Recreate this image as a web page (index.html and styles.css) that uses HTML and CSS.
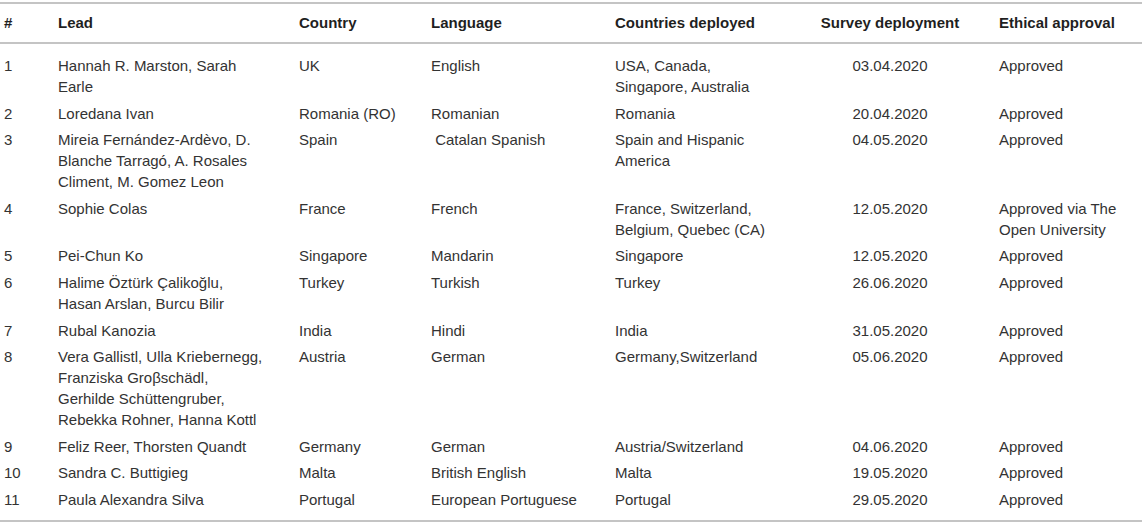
FILE: index.html
```html
<!DOCTYPE html>
<html lang="en">
<head>
<meta charset="utf-8">
<title>Survey deployment</title>
<link rel="stylesheet" href="styles.css">
</head>
<body>
<table class="survey">
  <colgroup>
    <col class="c-num">
    <col class="c-lead">
    <col class="c-country">
    <col class="c-lang">
    <col class="c-deployed">
    <col class="c-date">
    <col class="c-ethic">
  </colgroup>
  <thead>
    <tr>
      <th>#</th>
      <th class="lead">Lead</th>
      <th>Country</th>
      <th>Language</th>
      <th>Countries deployed</th>
      <th class="center">Survey deployment</th>
      <th>Ethical approval</th>
    </tr>
  </thead>
  <tbody>
    <tr>
      <td>1</td>
      <td class="lead">Hannah R. Marston, Sarah<br>Earle</td>
      <td>UK</td>
      <td>English</td>
      <td class="deployed">USA, Canada, Singapore, Australia</td>
      <td class="center">03.04.2020</td>
      <td>Approved</td>
    </tr>
    <tr>
      <td>2</td>
      <td class="lead">Loredana Ivan</td>
      <td>Romania (RO)</td>
      <td>Romanian</td>
      <td class="deployed">Romania</td>
      <td class="center">20.04.2020</td>
      <td>Approved</td>
    </tr>
    <tr>
      <td>3</td>
      <td class="lead">Mireia Fernández-Ardèvo, D.<br>Blanche Tarragó, A. Rosales<br>Climent, M. Gomez Leon</td>
      <td>Spain</td>
      <td>&nbsp;Catalan Spanish</td>
      <td class="deployed">Spain and Hispanic America</td>
      <td class="center">04.05.2020</td>
      <td>Approved</td>
    </tr>
    <tr>
      <td>4</td>
      <td class="lead">Sophie Colas</td>
      <td>France</td>
      <td>French</td>
      <td class="deployed">France, Switzerland, Belgium, Quebec (CA)</td>
      <td class="center">12.05.2020</td>
      <td>Approved via The Open University</td>
    </tr>
    <tr>
      <td>5</td>
      <td class="lead">Pei-Chun Ko</td>
      <td>Singapore</td>
      <td>Mandarin</td>
      <td class="deployed">Singapore</td>
      <td class="center">12.05.2020</td>
      <td>Approved</td>
    </tr>
    <tr>
      <td>6</td>
      <td class="lead">Halime Öztürk Çalikoğlu,<br>Hasan Arslan, Burcu Bilir</td>
      <td>Turkey</td>
      <td>Turkish</td>
      <td class="deployed">Turkey</td>
      <td class="center">26.06.2020</td>
      <td>Approved</td>
    </tr>
    <tr>
      <td>7</td>
      <td class="lead">Rubal Kanozia</td>
      <td>India</td>
      <td>Hindi</td>
      <td class="deployed">India</td>
      <td class="center">31.05.2020</td>
      <td>Approved</td>
    </tr>
    <tr>
      <td>8</td>
      <td class="lead">Vera Gallistl, Ulla Kriebernegg,<br>Franziska Groβschädl,<br>Gerhilde Schüttengruber,<br>Rebekka Rohner, Hanna Kottl</td>
      <td>Austria</td>
      <td>German</td>
      <td class="deployed">Germany,Switzerland</td>
      <td class="center">05.06.2020</td>
      <td>Approved</td>
    </tr>
    <tr>
      <td>9</td>
      <td class="lead">Feliz Reer, Thorsten Quandt</td>
      <td>Germany</td>
      <td>German</td>
      <td class="deployed">Austria/Switzerland</td>
      <td class="center">04.06.2020</td>
      <td>Approved</td>
    </tr>
    <tr>
      <td>10</td>
      <td class="lead">Sandra C. Buttigieg</td>
      <td>Malta</td>
      <td>British English</td>
      <td class="deployed">Malta</td>
      <td class="center">19.05.2020</td>
      <td>Approved</td>
    </tr>
    <tr>
      <td>11</td>
      <td class="lead">Paula Alexandra Silva</td>
      <td>Portugal</td>
      <td>European Portuguese</td>
      <td class="deployed">Portugal</td>
      <td class="center">29.05.2020</td>
      <td>Approved</td>
    </tr>
  </tbody>
</table>
</body>
</html>
```

FILE: styles.css
```css
html, body {
  margin: 0;
  padding: 0;
  background: #ffffff;
}

body {
  padding-top: 2px;
  font-family: "Liberation Sans", Arial, Helvetica, sans-serif;
  font-size: 15px;
  color: #333333;
}

.survey {
  width: 1142px;
  table-layout: fixed;
  border-collapse: separate;
  border-spacing: 0;
}

.c-num { width: 54px; }
.c-lead { width: 241px; }
.c-country { width: 132px; }
.c-lang { width: 184px; }
.c-deployed { width: 174px; }
.c-date { width: 210px; }
.c-ethic { width: 147px; }

.survey th,
.survey td {
  text-align: left;
  vertical-align: top;
  line-height: 21px;
  padding: 2.8px 8px 2.8px 4px;
}

.survey th {
  font-weight: bold;
  color: #1f1f1f;
  padding-top: 8px;
  padding-bottom: 9px;
  border-top: 2px solid #c4c4c4;
  border-bottom: 2px solid #c4c4c4;
}

.survey .lead {
  padding-right: 20px;
}

.survey .deployed {
  padding-right: 10px;
}

.survey .center {
  text-align: center;
  padding-left: 0;
  padding-right: 0;
}

.survey tbody tr:first-child td {
  padding-top: 11px;
}

.survey tbody tr:last-child td {
  padding-bottom: 10px;
  border-bottom: 2px solid #c4c4c4;
}
```
